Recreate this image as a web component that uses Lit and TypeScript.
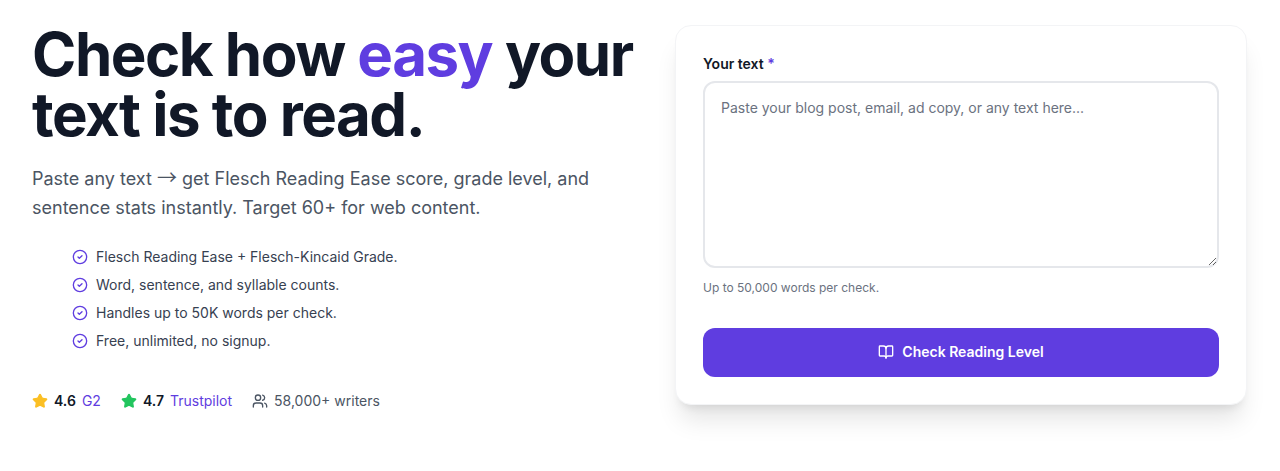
import { LitElement, html, css } from "lit";
import { customElement } from "lit/decorators.js";

const check = html`<svg class="chk" viewBox="0 0 24 24" fill="none" stroke="currentColor" stroke-width="2" stroke-linecap="round" stroke-linejoin="round"><circle cx="12" cy="12" r="10"/><path d="m9 12 2 2 4-4"/></svg>`;
const star = (c: string) => html`<svg class="star ${c}" viewBox="0 0 24 24" fill="currentColor" stroke="currentColor" stroke-width="2" stroke-linecap="round" stroke-linejoin="round"><path d="M11.525 2.295a.53.53 0 0 1 .95 0l2.31 4.679a2.123 2.123 0 0 0 1.595 1.16l5.166.756a.53.53 0 0 1 .294.904l-3.736 3.638a2.123 2.123 0 0 0-.611 1.878l.882 5.14a.53.53 0 0 1-.771.56l-4.618-2.428a2.122 2.122 0 0 0-1.973 0L6.396 21.01a.53.53 0 0 1-.77-.56l.881-5.139a2.122 2.122 0 0 0-.611-1.879L2.16 9.795a.53.53 0 0 1 .294-.906l5.165-.755a2.122 2.122 0 0 0 1.597-1.16z"/></svg>`;

@customElement("app-root")
export class AppRoot extends LitElement {
  static styles = css`
    :host { display: block; height: 471px; background: #fff; font-family: Inter, "Liberation Sans", sans-serif; overflow: hidden; }
    .grid { display: grid; grid-template-columns: 1fr 572px; column-gap: 32px; padding: 24px 33px 0 32px; }
    h1 { margin: 0; font-size: 60px; line-height: 60px; font-weight: 700; letter-spacing: -1.5px; color: #111827; white-space: nowrap; }
    h1 span { color: #5f3de0; }
    .lead { margin: 20px 0 0; font-size: 18px; line-height: 29px; color: #4b5563; max-width: 576px; }
    .arrow { font-family: "Noto Sans CJK SC", sans-serif; font-size: 20px; line-height: 1; }
    ul { list-style: none; margin: 24px 0 0; padding: 0 0 0 40px; display: flex; flex-direction: column; gap: 6px; }
    li { display: flex; align-items: center; gap: 8px; font-size: 14px; line-height: 22px; color: #374151; }
    .chk { width: 16px; height: 16px; color: #5f3de0; flex: none; }
    .proof { display: flex; align-items: center; margin-top: 39px; font-size: 14px; line-height: 20px; color: #4b5563; }
    .item { display: flex; align-items: center; }
    .star { width: 16px; height: 16px; flex: none; margin-right: 6px; }
    .g { color: #fbbf24; } .t { color: #22c55e; }
    b { font-weight: 600; color: #111827; margin-right: 6px; }
    a { color: #5f3de0; text-decoration: none; }
    .item + .item { margin-left: 20px; }
    .users { width: 16px; height: 16px; margin-right: 6px; color: #4b5563; flex: none; }
    .card { margin-top: 1px; height: 380px; box-sizing: border-box; background: #fff; border: 1px solid #f3f4f6; border-radius: 16px; padding: 28px 27px 27px; box-shadow: 0 20px 25px -5px rgba(0,0,0,.1), 0 8px 10px -6px rgba(0,0,0,.1); display: flex; flex-direction: column; }
    label { font-size: 14px; line-height: 20px; font-weight: 600; color: #111827; }
    label span { color: #5f3de0; }
    textarea { display: block; box-sizing: border-box; width: 100%; height: 187px; margin-top: 7px; padding: 15px 16px; border: 2px solid #e5e7eb; border-radius: 12px; font: 14px/20px Inter, sans-serif; color: #111827; outline: none; background: #fff; }
    textarea::placeholder { color: #6b7280; opacity: 1; }
    .hint { margin: 12px 0 0; font-size: 12px; line-height: 16px; color: #6b7280; }
    button { margin-top: 32px; height: 49px; padding: 0 0 1px; border: 0; border-radius: 12px; background: #5f3de0; color: #fff; font: 600 14px/20px Inter, sans-serif; display: flex; align-items: center; justify-content: center; gap: 8px; }
    button svg { width: 16px; height: 16px; }
  `;
  render() {
    const items = ["Flesch Reading Ease + Flesch-Kincaid Grade.", "Word, sentence, and syllable counts.", "Handles up to 50K words per check.", "Free, unlimited, no signup."];
    return html`<div class="grid">
      <div>
        <h1>Check how <span>easy</span> your<br />text is to read.</h1>
        <p class="lead">Paste any text <span class="arrow">→</span> get Flesch Reading Ease score, grade level, and sentence stats instantly. Target 60+ for web content.</p>
        <ul>${items.map((i) => html`<li>${check}${i}</li>`)}</ul>
        <div class="proof">
          <div class="item">${star("g")}<b>4.6</b><a>G2</a></div>
          <div class="item">${star("t")}<b>4.7</b><a>Trustpilot</a></div>
          <div class="item"><svg class="users" viewBox="0 0 24 24" fill="none" stroke="currentColor" stroke-width="2" stroke-linecap="round" stroke-linejoin="round"><path d="M16 21v-2a4 4 0 0 0-4-4H6a4 4 0 0 0-4 4v2"/><circle cx="9" cy="7" r="4"/><path d="M22 21v-2a4 4 0 0 0-3-3.87"/><path d="M16 3.13a4 4 0 0 1 0 7.75"/></svg>58,000+ writers</div>
        </div>
      </div>
      <div class="card">
        <label>Your text <span>*</span></label>
        <textarea placeholder="Paste your blog post, email, ad copy, or any text here..."></textarea>
        <p class="hint">Up to 50,000 words per check.</p>
        <button><svg viewBox="0 0 24 24" fill="none" stroke="currentColor" stroke-width="2" stroke-linecap="round" stroke-linejoin="round"><path d="M12 7v14"/><path d="M3 18a1 1 0 0 1-1-1V4a1 1 0 0 1 1-1h5a4 4 0 0 1 4 4 4 4 0 0 1 4-4h5a1 1 0 0 1 1 1v13a1 1 0 0 1-1 1h-6a3 3 0 0 0-3 3 3 3 0 0 0-3-3z"/></svg>Check Reading Level</button>
      </div>
    </div>`;
  }
}
